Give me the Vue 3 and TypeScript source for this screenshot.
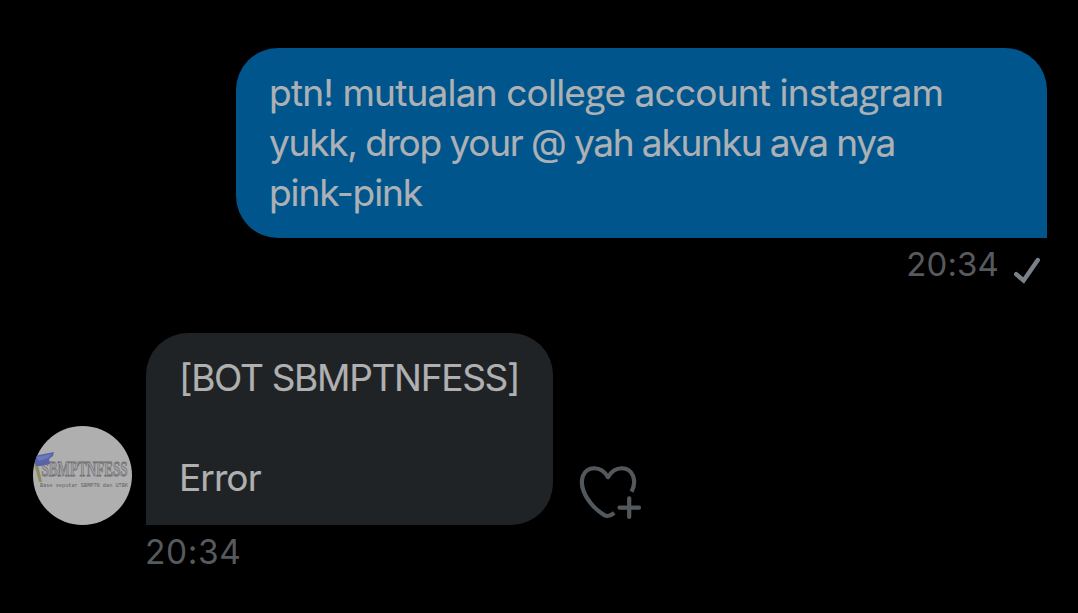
<script setup lang="ts">
interface Line { text: string; cls: string }

const sent: Line[] = [
  { text: 'ptn! mutualan college account instagram', cls: 's1' },
  { text: 'yukk, drop your @ yah akunku ava nya', cls: 's2' },
  { text: 'pink-pink', cls: 's3' },
]
const received: Line[] = [
  { text: '[BOT SBMPTNFESS]', cls: 'r1' },
  { text: '\u00a0', cls: 'r2' },
  { text: 'Error', cls: 'r3' },
]

// Separates each "g" so it can use a double-storey letterform.
const runs = (text: string): string[] => text.split(/(g)/).filter(Boolean)
</script>

<template>
  <main class="chat">
    <section class="outgoing">
      <div class="bubble blue">
        <div v-for="l in sent" :key="l.cls" class="line" :class="l.cls"><span v-for="(r, i) in runs(l.text)" :key="i" :class="{ gee: r === 'g' }">{{ r }}</span></div>
      </div>
      <div class="meta">
        <time>20:34</time>
        <svg class="check" width="30" height="30" viewBox="0 0 30 30">
          <path d="M4.2 18.2L11.6 24.4L25.8 4" />
        </svg>
      </div>
    </section>

    <section class="incoming">
      <div class="row">
        <svg class="avatar" width="99" height="99" viewBox="0 0 99 99">
          <defs><clipPath id="disc"><circle cx="49.5" cy="49.5" r="49.5" /></clipPath></defs>
          <circle cx="49.5" cy="49.5" r="49.5" fill="#afafaf" />
          <g clip-path="url(#disc)">
            <path d="M1.5 39L6 56L9 56L5 39Z" fill="#8c8c5c" />
          </g>
          <text class="brand" x="8.5" y="50.3" textLength="86" lengthAdjust="spacingAndGlyphs">SBMPTNFESS</text>
          <text class="tagline" x="7" y="61.3" textLength="88" lengthAdjust="spacingAndGlyphs">Base seputar SBMPTN dan UTBK</text>
          <g clip-path="url(#disc)">
            <path d="M1 30L21 26L20 30L16 33L17 38L8 40L3 40L1 36Z" fill="#5964a8" />
            <path d="M3 31L19 28L15 32L6 35Z" fill="#6c78bd" />
          </g>
        </svg>
        <div class="bubble grey">
          <div v-for="l in received" :key="l.cls" class="line" :class="l.cls">{{ l.text }}</div>
        </div>
        <svg class="heart" width="66" height="60" viewBox="0 0 66 60">
          <path d="M53.6 29.8C56.3 24.5 57 19 55 13.8C50.8 3.8 37 3.2 30 15.2C23 3.2 9.2 3.8 5 13.8C1.5 23 6.5 34.5 15 43.8C18.5 47.5 22 50.6 26 52.8C29.5 54.8 32 54.4 36.2 50.8" />
          <path class="plus" d="M51.2 36.3V55M41.5 45.6H61" />
        </svg>
      </div>
      <time>20:34</time>
    </section>
  </main>
</template>

<style>
body { margin: 0; background: #000; }
</style>

<style scoped>
.chat {
  box-sizing: border-box;
  width: 1078px;
  height: 613px;
  padding: 48px 31px 0 33px;
  background: #000;
  color: #b0b0b0;
  font-family: Inter, "Liberation Sans", sans-serif;
}
.outgoing { display: flex; flex-direction: column; align-items: flex-end; height: 285px; }
.bubble { box-sizing: border-box; padding: 20px 33px; font-size: 37px; line-height: 50px; -webkit-text-stroke: 0.15px currentColor; }
.blue { width: 811px; height: 190px; border-radius: 42px 42px 0 42px; background: #00568c; color: #adb1b5; }
.grey { width: 407px; height: 192px; margin-left: 14px; border-radius: 42px 42px 42px 0; background: #202326; }
.line { height: 50px; white-space: nowrap; }
.gee { font-family: "Open Sans", Inter, sans-serif; line-height: 1; }
.s1 { letter-spacing: -0.78px; word-spacing: -0.3px; }
.s2 { letter-spacing: -1.25px; word-spacing: -0.7px; }
.s3 { letter-spacing: -1.1px; }
.r1 { letter-spacing: -1.3px; }
.r3 { letter-spacing: -0.9px; }
.meta { display: flex; align-items: flex-start; padding-right: 5px; }
time { display: block; font-size: 33px; line-height: 40px; color: #56595e; }
.meta time { margin-top: 6px; letter-spacing: 0.1px; }
.check { margin: 18px 0 0 13px; fill: none; stroke: #798087; stroke-width: 4.4; stroke-linecap: round; }
.row { display: flex; align-items: flex-end; }
.avatar { flex: none; overflow: visible; }
.brand { font: bold 22px "Liberation Serif", serif; fill: #a3a3a3; stroke: #6c6c70; stroke-width: 0.8; }
.tagline { font: 5px "Liberation Mono", monospace; fill: #606064; }
.heart { margin: 0 0 3px 25px; fill: none; stroke: #53585d; stroke-width: 4.2; stroke-linejoin: round; }
.plus { stroke-linecap: round; }
.incoming time { margin: 7px 0 0 112px; font-size: 33.5px; letter-spacing: 0.6px; }
</style>
